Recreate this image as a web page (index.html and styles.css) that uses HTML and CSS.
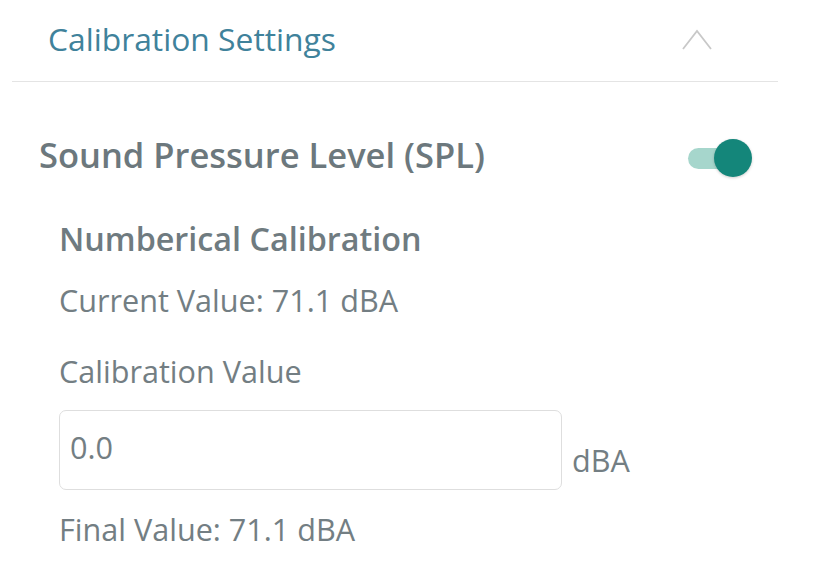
FILE: index.html
```html
<!DOCTYPE html>
<html>
<head>
  <meta charset="utf-8">
  <link rel="stylesheet" href="styles.css">
</head>
<body>
  <div class="panel">
    <div class="panel-header">
      <span class="panel-title">Calibration Settings</span>
      <svg class="chevron" width="34" height="24" viewBox="0 0 34 24">
        <path d="M3 22 L17 4 L31 22" fill="none" stroke="#c8c8c8" stroke-width="1.8"/>
      </svg>
    </div>

    <div class="setting-row">
      <span class="setting-name">Sound Pressure Level (SPL)</span>
      <div class="toggle on">
        <div class="toggle-track"></div>
        <div class="toggle-knob"></div>
      </div>
    </div>

    <div class="calibration">
      <h3>Numberical Calibration</h3>
      <p class="info current">Current Value: 71.1 dBA</p>
      <label for="calValue">Calibration Value</label>
      <div class="input-row">
        <input type="text" id="calValue" value="0.0">
        <span class="unit">dBA</span>
      </div>
      <p class="info final">Final Value: 71.1 dBA</p>
    </div>
  </div>
</body>
</html>
```

FILE: styles.css
```css
body {
  margin: 0;
  background: #fff;
  font-family: "Open Sans", "Noto Sans", sans-serif;
  color: #6f7b80;
}

.panel {
  width: 766px;
  margin-left: 12px;
}

.panel-header {
  display: flex;
  align-items: center;
  justify-content: space-between;
  height: 81px;
  padding: 0 64px 0 36px;
  border-bottom: 1px solid #e4e4e4;
}

.panel-title {
  font-size: 31.8px;
  line-height: 40px;
  color: #3f829b;
  margin-top: -4px;
}

.chevron {
  margin-top: -3px;
}

.setting-row {
  display: flex;
  align-items: center;
  justify-content: space-between;
  padding: 50px 26px 0 27px;
}

.setting-name {
  font-size: 34.5px;
  line-height: 40px;
  font-weight: 600;
  color: #6c787d;
}

.toggle {
  position: relative;
  width: 64px;
  height: 40px;
  margin-top: 6px;
}

.toggle-track {
  position: absolute;
  left: 0;
  top: 10px;
  width: 50px;
  height: 21px;
  border-radius: 11px;
  background: #a6d6cc;
}

.toggle-knob {
  position: absolute;
  right: 0;
  top: 1px;
  width: 38px;
  height: 38px;
  border-radius: 50%;
  background: #14867a;
  box-shadow: 0 1px 3px rgba(0, 0, 0, 0.2);
}

.calibration {
  padding: 40px 0 0 47px;
}

.calibration h3 {
  margin: 0;
  font-size: 32.3px;
  line-height: 40px;
  font-weight: 600;
  color: #6f7b80;
}

.info {
  margin: 22px 0 0 0;
  font-size: 30.6px;
  line-height: 40px;
  color: #737e83;
}

label {
  display: block;
  margin-top: 31px;
  font-size: 30.6px;
  line-height: 40px;
  color: #737e83;
}

.input-row {
  display: flex;
  align-items: flex-end;
  gap: 10px;
  margin-top: 19px;
}

input[type="text"] {
  width: 503px;
  height: 80px;
  box-sizing: border-box;
  padding: 0 10px 6px;
  border: 1px solid #dedede;
  border-radius: 7px;
  font-family: inherit;
  font-size: 30.6px;
  color: #737e83;
  outline: none;
}

.unit {
  font-size: 30.6px;
  line-height: 40px;
  margin-bottom: 10px;
  color: #737e83;
}

.info.final {
  margin-top: 19px;
}
```
